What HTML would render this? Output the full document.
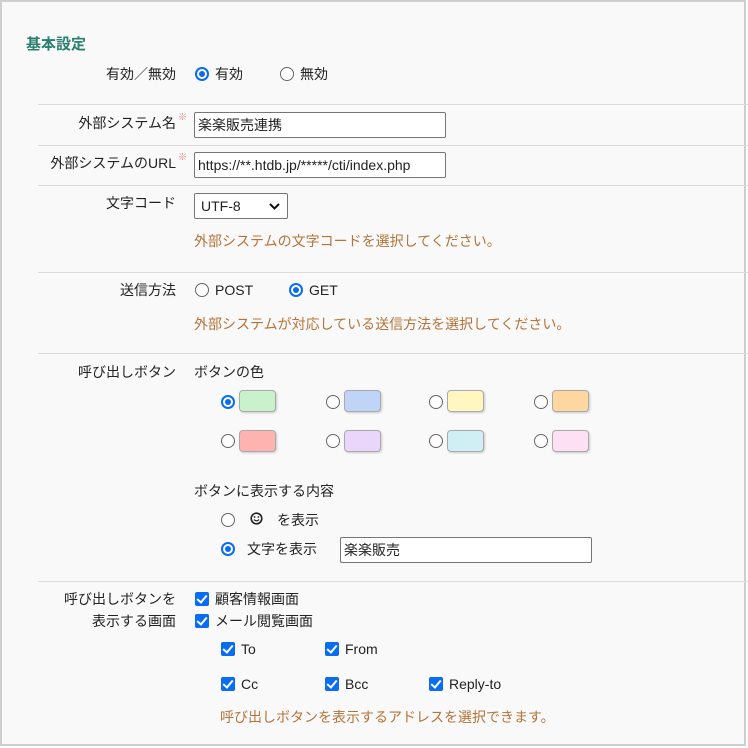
<!DOCTYPE html>
<html><head><meta charset="utf-8"><style>
*{margin:0;padding:0;box-sizing:border-box}
body{width:748px;height:748px;background:#fff;font-family:"Liberation Sans","Noto Sans CJK JP",sans-serif;font-size:14px;color:#222;position:relative;overflow:hidden}
#frame{position:absolute;left:0;top:0;width:746px;height:746px;border:2px solid #cfcfcf;background:#f9f9f9}
.a{position:absolute;white-space:nowrap;line-height:18px}
.r{text-align:right}
.hr{position:absolute;left:38px;right:0;height:1px;background:#dcdcdc}
.rad{position:absolute;width:14px;height:14px;border-radius:50%;border:1px solid #666;background:#fff}
.rad.on{border:2px solid #0a6cf0}
.rad.on::after{content:"";position:absolute;left:2px;top:2px;width:6px;height:6px;border-radius:50%;background:#0a6cf0}
.inp{position:absolute;height:26px;border:1px solid #767676;border-radius:2px;background:#fff;padding:0 3px;line-height:24px;overflow:hidden;white-space:nowrap}
.sw{position:absolute;width:37px;height:22px;border-radius:4px;border:1px solid #aaa;box-shadow:1px 1px 2px rgba(0,0,0,.2)}
.cb{position:absolute;width:14px;height:14px;border-radius:2px;background:#0a6cf0}
.cb::after{content:"";position:absolute;left:4px;top:1px;width:4px;height:8px;border:solid #fff;border-width:0 2px 2px 0;transform:rotate(40deg)}
.hint{color:#b5733a}
.req{color:#e08080;font-size:9px;position:absolute}
</style></head><body>
<div id="frame"></div>
<div class="a" style="left:26px;top:36px;font-size:15px;font-weight:bold;color:#2a7f70">基本設定</div>

<div class="a r" style="right:572px;top:65px">有効／無効</div>
<div class="rad on" style="left:195px;top:67px"></div><div class="a" style="left:215px;top:65px">有効</div>
<div class="rad" style="left:280px;top:67px"></div><div class="a" style="left:300px;top:65px">無効</div>
<div class="hr" style="top:104px"></div>

<div class="a r" style="right:572px;top:114px">外部システム名</div><span class="req" style="left:178px;top:110px">※</span>
<div class="inp" style="left:194px;top:112px;width:252px">楽楽販売連携</div>
<div class="hr" style="top:145px"></div>
<div class="a r" style="right:572px;top:154px">外部システムのURL</div><span class="req" style="left:178px;top:150px">※</span>
<div class="inp" style="left:194px;top:152px;width:252px">https://**.htdb.jp/*****/cti/index.php</div>
<div class="hr" style="top:185px"></div>

<div class="a r" style="right:572px;top:194px">文字コード</div>
<div class="inp" style="left:194px;top:193px;width:94px;padding-left:6px">UTF-8<svg style="position:absolute;right:7px;top:9px" width="11" height="7" viewBox="0 0 11 7"><path d="M1 1l4.5 4.5L10 1" fill="none" stroke="#111" stroke-width="2"/></svg></div>
<div class="a hint" style="left:194px;top:232px">外部システムの文字コードを選択してください。</div>
<div class="hr" style="top:272px"></div>

<div class="a r" style="right:572px;top:281px">送信方法</div>
<div class="rad" style="left:195px;top:283px"></div><div class="a" style="left:215px;top:281px">POST</div>
<div class="rad on" style="left:289px;top:283px"></div><div class="a" style="left:309px;top:281px">GET</div>
<div class="a hint" style="left:194px;top:315px">外部システムが対応している送信方法を選択してください。</div>
<div class="hr" style="top:353px"></div>

<div class="a r" style="right:572px;top:363px">呼び出しボタン</div>
<div class="a" style="left:194px;top:363px">ボタンの色</div>
<div class="rad on" style="left:221px;top:395px"></div><div class="sw" style="left:239px;top:390px;background:#c9f2cc"></div>
<div class="rad" style="left:326px;top:395px"></div><div class="sw" style="left:344px;top:390px;background:#c0d4f8"></div>
<div class="rad" style="left:429px;top:395px"></div><div class="sw" style="left:447px;top:390px;background:#fff6c0"></div>
<div class="rad" style="left:534px;top:395px"></div><div class="sw" style="left:552px;top:390px;background:#fed6a0"></div>
<div class="rad" style="left:221px;top:434px"></div><div class="sw" style="left:239px;top:430px;background:#ffb3b0"></div>
<div class="rad" style="left:326px;top:434px"></div><div class="sw" style="left:344px;top:430px;background:#ead6fb"></div>
<div class="rad" style="left:429px;top:434px"></div><div class="sw" style="left:447px;top:430px;background:#cfeff5"></div>
<div class="rad" style="left:534px;top:434px"></div><div class="sw" style="left:552px;top:430px;background:#fde0f4"></div>
<div class="a" style="left:194px;top:482px">ボタンに表示する内容</div>
<div class="rad" style="left:221px;top:513px"></div>
<svg style="position:absolute;left:250px;top:512px" width="13" height="13" viewBox="0 0 13 13"><circle cx="6.5" cy="6.5" r="5.3" fill="none" stroke="#222" stroke-width="1.6"/><circle cx="4.6" cy="5" r="0.9" fill="#222"/><circle cx="8.4" cy="5" r="0.9" fill="#222"/><path d="M4 7.6q2.5 2.6 5 0" fill="none" stroke="#222" stroke-width="1.2"/></svg>
<div class="a" style="left:277px;top:511px">を表示</div>
<div class="rad on" style="left:221px;top:542px"></div><div class="a" style="left:247px;top:540px">文字を表示</div>
<div class="inp" style="left:340px;top:537px;width:252px">楽楽販売</div>
<div class="hr" style="top:581px"></div>

<div class="a r" style="right:572px;top:590px">呼び出しボタンを</div>
<div class="a r" style="right:572px;top:612px">表示する画面</div>
<div class="cb" style="left:195px;top:592px"></div><div class="a" style="left:215px;top:590px">顧客情報画面</div>
<div class="cb" style="left:195px;top:614px"></div><div class="a" style="left:215px;top:612px">メール閲覧画面</div>
<div class="cb" style="left:221px;top:642px"></div><div class="a" style="left:241px;top:640px">To</div>
<div class="cb" style="left:325px;top:642px"></div><div class="a" style="left:345px;top:640px">From</div>
<div class="cb" style="left:221px;top:677px"></div><div class="a" style="left:241px;top:675px">Cc</div>
<div class="cb" style="left:325px;top:677px"></div><div class="a" style="left:345px;top:675px">Bcc</div>
<div class="cb" style="left:429px;top:677px"></div><div class="a" style="left:449px;top:675px">Reply-to</div>
<div class="a hint" style="left:220px;top:708px">呼び出しボタンを表示するアドレスを選択できます。</div>
</body></html>
